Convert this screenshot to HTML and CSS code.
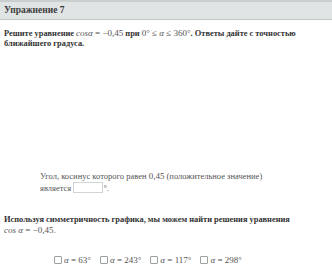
FILE: index.html
```html
<!DOCTYPE html>
<html>
<head>
  <title>Упражнение 7</title>
  <link rel="stylesheet" href="styles.css">
</head>
<body>
  <div class="exercise">
    <div class="header">Упражнение 7</div>

    <div class="content">
      <p class="task">
        Решите уравнение <span class="math"><i>cosα</i> = −0,45</span> при <span class="math">0° ≤ <i>α</i> ≤ 360°</span>.
        Ответы дайте с точностью<br>ближайшего градуса.
      </p>

      <div class="hint">
        Угол, косинус которого равен <span class="math">0,45</span> (положительное значение)<br>
        является <span class="answer-box"></span>°.
      </div>

      <p class="task">
        Используя симметричность графика, мы можем найти решения уравнения<br>
        <span class="math"><i>cos α</i> = −0,45.</span>
      </p>

      <div class="options">
        <label class="option"><span class="check"></span><span class="math"><i>α</i> = 63°</span></label>
        <label class="option"><span class="check"></span><span class="math"><i>α</i> = 243°</span></label>
        <label class="option"><span class="check"></span><span class="math"><i>α</i> = 117°</span></label>
        <label class="option"><span class="check"></span><span class="math"><i>α</i> = 298°</span></label>
      </div>
    </div>
  </div>
</body>
</html>
```

FILE: styles.css
```css
* {
  margin: 0;
  padding: 0;
  box-sizing: border-box;
}

body {
  width: 332px;
  background: #ffffff;
  color: #333333;
  font-family: "Liberation Serif", "Times New Roman", "DejaVu Serif", serif;
  font-size: 8.5px;
}

.header {
  height: 20px;
  padding: 3px 4px 0;
  background: #e0e4e4;
  border-top: 2px solid #c9cfcf;
  border-bottom: 1px solid #c3c9c9;
  font-size: 9.5px;
  font-weight: 700;
  color: #3c3c3c;
}

.content {
  display: flex;
  flex-direction: column;
  padding: 8px 4px 0;
}

.task {
  font-size: 8.4px;
  font-weight: 700;
  line-height: 10px;
  color: #333333;
}

.math {
  font-weight: 400;
  font-size: 9px;
  color: #555555;
}

.hint {
  margin-top: 121px;
  padding-left: 36px;
  line-height: 12px;
  color: #555555;
}

.answer-box {
  display: inline-block;
  width: 30px;
  height: 11px;
  vertical-align: -2px;
  border: 1px solid #cfd4d4;
  background: #ffffff;
}

.hint + .task {
  margin-top: 21px;
}

.options {
  display: flex;
  gap: 9px;
  margin-top: 19px;
  padding-left: 50px;
}

.option {
  display: flex;
  align-items: center;
  gap: 2px;
  color: #555555;
}

.check {
  width: 8px;
  height: 8px;
  border: 1px solid #9aa0a0;
  border-radius: 1px;
}
```
